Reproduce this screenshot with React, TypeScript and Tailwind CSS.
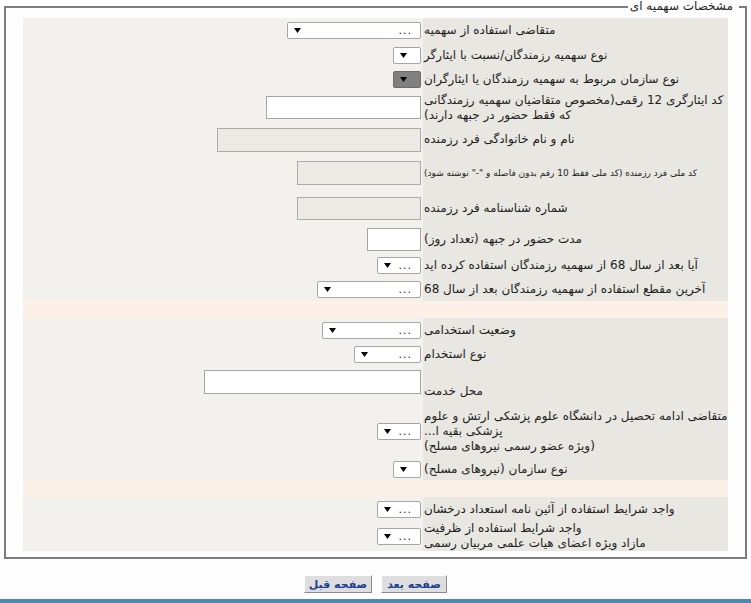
import React from 'react';

type Ctrl =
  | { kind: 'select'; w: string; dots?: boolean; dark?: boolean }
  | { kind: 'input'; w: string; h: string; disabled?: boolean };

type Row = {
  h: string;
  label: React.ReactNode;
  ctrl: Ctrl;
  small?: boolean;
  labelAlign?: string;
  ctrlAlign?: string;
};

const Arrow = () => (
  <svg width="7" height="5" viewBox="0 0 7 5" className="shrink-0">
    <path d="M0 0H7L3.5 5Z" fill="#000" />
  </svg>
);

function Select({ w, dots = true, dark = false }: { w: string; dots?: boolean; dark?: boolean }) {
  return (
    <div
      className={`flex h-[17px] items-center justify-between rounded-[2px] border pl-[6px] pr-[8px] ${w} ${
        dark ? 'border-[#6b6b6b] bg-[#808080]' : 'border-[#a6a6a6] bg-white'
      }`}
    >
      <span className="text-[11px] leading-none tracking-[1px]">{dots ? '...' : ''}</span>
      <Arrow />
    </div>
  );
}

function Field({ w, h, disabled }: { w: string; h: string; disabled?: boolean }) {
  return (
    <div
      className={`${w} ${h} border ${disabled ? 'border-[#acacac] bg-[#ebeae5]' : 'border-[#a4a4a4] bg-white'}`}
    />
  );
}

const rows: (Row | 'sep')[] = [
  { h: 'h-[25px]', label: 'متقاضی استفاده از سهمیه', ctrl: { kind: 'select', w: 'w-[134px]' } },
  { h: 'h-[24px]', label: 'نوع سهمیه رزمندگان/نسبت با ایثارگر', ctrl: { kind: 'select', w: 'w-[28px]', dots: false } },
  {
    h: 'h-[24px]',
    label: 'نوع سازمان مربوط به سهمیه رزمندگان یا ایثارگران',
    ctrl: { kind: 'select', w: 'w-[28px]', dots: false, dark: true },
  },
  {
    h: 'h-[33px]',
    label: (
      <>
        کد ایثارگری 12 رقمی(مخصوص متقاضیان سهمیه رزمندگانی
        <br />
        که فقط حضور در جبهه دارند)
      </>
    ),
    ctrl: { kind: 'input', w: 'w-[155px]', h: 'h-[23px]' },
  },
  { h: 'h-[31px]', label: 'نام و نام خانوادگی فرد رزمنده', ctrl: { kind: 'input', w: 'w-[204px]', h: 'h-[24px]', disabled: true } },
  {
    h: 'h-[36px]',
    small: true,
    label: 'کد ملی فرد رزمنده (کد ملی فقط 10 رقم بدون فاصله و "-" نوشته شود)',
    ctrl: { kind: 'input', w: 'w-[124px]', h: 'h-[24px]', disabled: true },
  },
  { h: 'h-[35px]', label: 'شماره شناسنامه فرد رزمنده', ctrl: { kind: 'input', w: 'w-[124px]', h: 'h-[23px]', disabled: true } },
  { h: 'h-[27px]', label: 'مدت حضور در جبهه (تعداد روز)', ctrl: { kind: 'input', w: 'w-[54px]', h: 'h-[23px]' } },
  { h: 'h-[24px]', label: 'آیا بعد از سال 68 از سهمیه رزمندگان استفاده کرده اید', ctrl: { kind: 'select', w: 'w-[44px]' } },
  { h: 'h-[24px]', label: 'آخرین مقطع استفاده از سهمیه رزمندگان بعد از سال 68', ctrl: { kind: 'select', w: 'w-[104px]' } },
  'sep',
  { h: 'h-[24px]', label: 'وضعیت استخدامی', ctrl: { kind: 'select', w: 'w-[99px]' } },
  { h: 'h-[24px]', label: 'نوع استخدام', ctrl: { kind: 'select', w: 'w-[67px]' } },
  {
    h: 'h-[38px]',
    label: 'محل خدمت',
    ctrl: { kind: 'input', w: 'w-[217px]', h: 'h-[24px]' },
    labelAlign: 'items-end pb-[5px]',
    ctrlAlign: 'items-start pt-[4px]',
  },
  {
    h: 'h-[54px]',
    label: (
      <>
        متقاضی ادامه تحصیل در دانشگاه علوم پزشکی ارتش و علوم
        <br />
        پزشکی بقیه ا...
        <br />
        (ویژه عضو رسمی نیروهای مسلح)
      </>
    ),
    ctrl: { kind: 'select', w: 'w-[44px]' },
  },
  { h: 'h-[22px]', label: 'نوع سازمان (نیروهای مسلح)', ctrl: { kind: 'select', w: 'w-[28px]', dots: false } },
  'sep',
  { h: 'h-[24px]', label: 'واجد شرایط استفاده از آئین نامه استعداد درخشان', ctrl: { kind: 'select', w: 'w-[44px]' } },
  {
    h: 'h-[30px]',
    label: (
      <>
        واجد شرایط استفاده از ظرفیت
        <br />
        مازاد ویژه اعضای هیات علمی مربیان رسمی
      </>
    ),
    ctrl: { kind: 'select', w: 'w-[44px]' },
  },
];

function FormRow({ row }: { row: Row }) {
  const c = row.ctrl;
  return (
    <div className={`grid grid-cols-[305px_400px] ${row.h}`}>
      <div
        className={`flex bg-[#e8e7e2] pl-[1px] text-left whitespace-nowrap ${row.labelAlign ?? 'items-center'} ${
          row.small ? 'text-[9px] leading-[12px]' : 'leading-[15px]'
        }`}
      >
        <div className="w-full text-left">{row.label}</div>
      </div>
      <div className={`flex bg-[#f2f1ed] pr-[2px] ${row.ctrlAlign ?? 'items-center'}`}>
        {c.kind === 'select' ? (
          <Select w={c.w} dots={c.dots} dark={c.dark} />
        ) : (
          <Field w={c.w} h={c.h} disabled={c.disabled} />
        )}
      </div>
    </div>
  );
}

export default function App() {
  return (
    <div
      dir="rtl"
      className="flex h-[603px] w-[751px] flex-col overflow-hidden bg-[#fdfdfd] font-['DejaVu_Sans',sans-serif] text-[12px] text-[#1e1e1e]"
    >
      <fieldset className="mx-[4px] border-2 border-[#7c7c7c] p-0">
        <legend className="mr-[6px] pr-[6px] pl-[2px] leading-[13px]">مشخصات سهمیه ای</legend>
        <div className="px-[17px] pt-[5px] pb-[6px]">
          {rows.map((r, i) =>
            r === 'sep' ? (
              <div key={i} className="h-[17px] bg-[#fcf1e6]" />
            ) : (
              <FormRow key={i} row={r} />
            )
          )}
        </div>
      </fieldset>

      <div className="mt-[16px] flex justify-center gap-[9px]">
        <button className="h-[18px] w-[66px] border border-t-white border-l-white border-r-[#8a8a8a] border-b-[#8a8a8a] bg-[#dedede] text-[11px] leading-none font-bold text-[#1c3f94]">
          صفحه بعد
        </button>
        <button className="h-[18px] w-[68px] border border-t-white border-l-white border-r-[#8a8a8a] border-b-[#8a8a8a] bg-[#dedede] text-[11px] leading-none font-bold text-[#1c3f94]">
          صفحه قبل
        </button>
      </div>

      <div className="mt-auto h-[4px] bg-[#4b8ab6]" />
    </div>
  );
}
